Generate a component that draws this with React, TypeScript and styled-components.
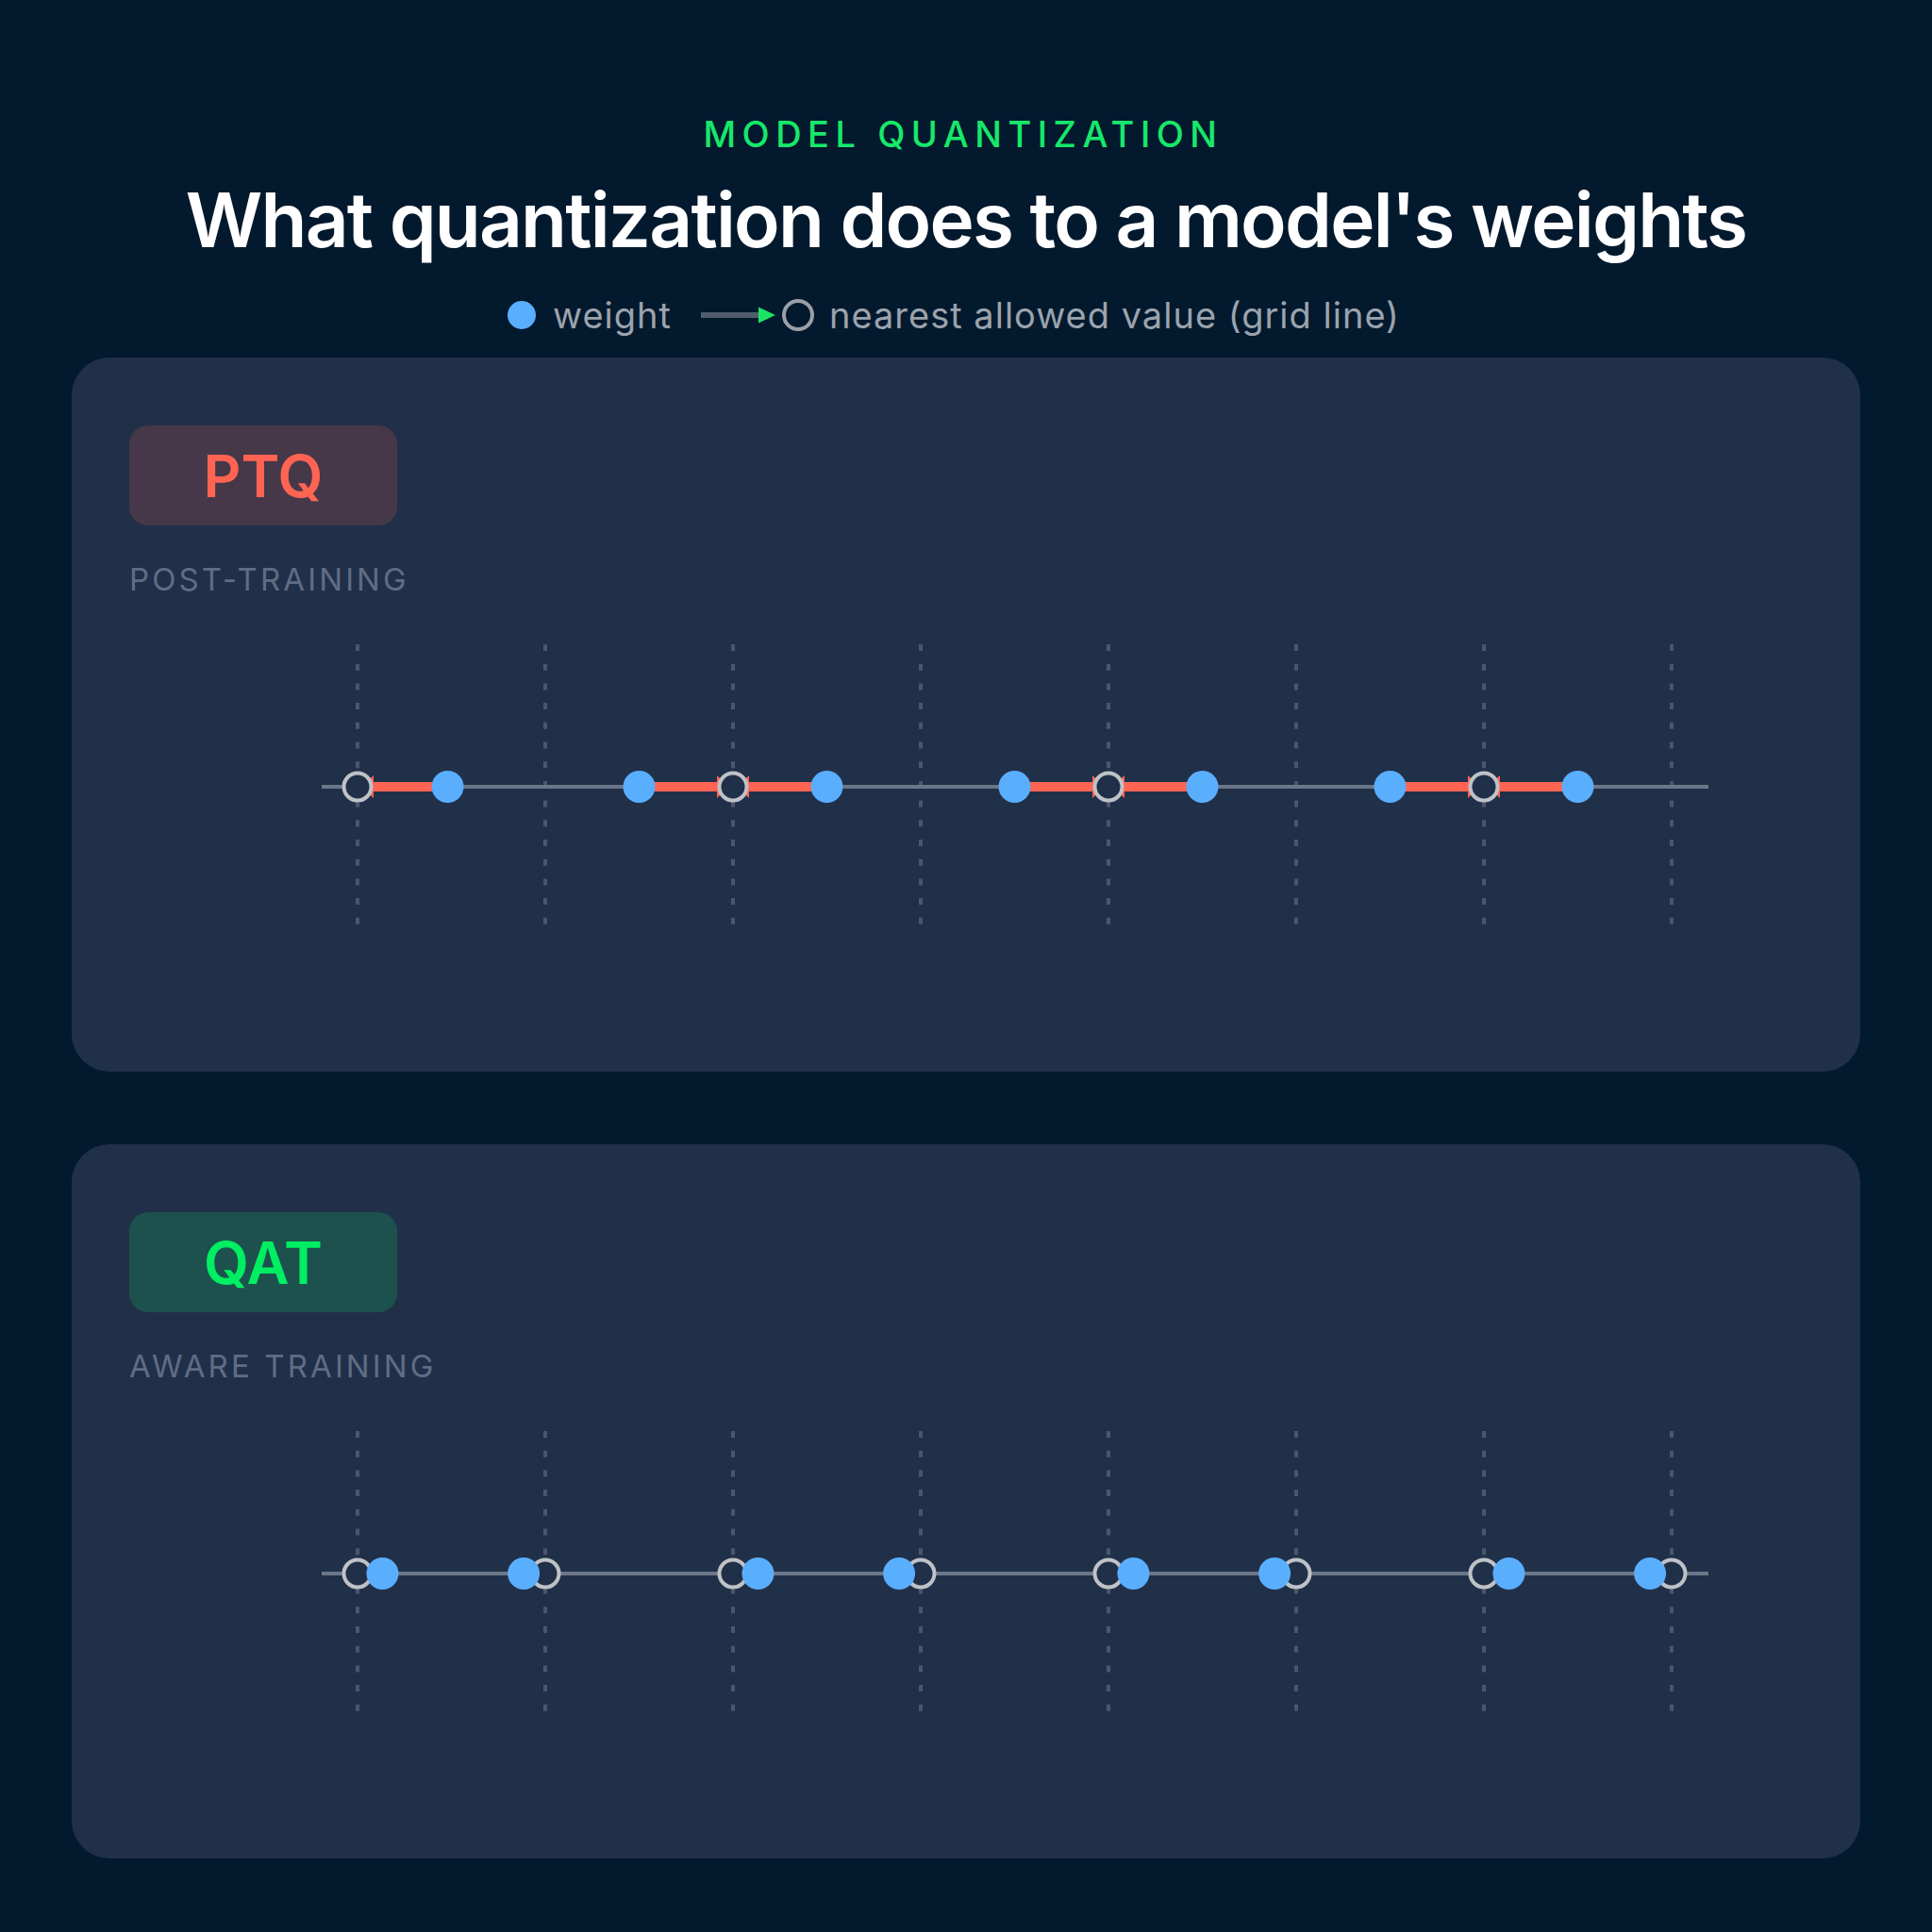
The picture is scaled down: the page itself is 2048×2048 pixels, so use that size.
import React from 'react';
import styled, { createGlobalStyle } from 'styled-components';

const GlobalStyle = createGlobalStyle`
  html, body {
    margin: 0;
    padding: 0;
    background: #03192e;
  }
  body {
    font-family: Inter, "Noto Sans", "Liberation Sans", sans-serif;
  }
`;

const CARD_BG = '#213049';
const GRID_X0 = 242;
const GRID_STEP = 199;
const AXIS_Y = 151;
const CHART_H = 300;

type Pair = { weight: number; target: number };

const ptqPairs: Pair[] = [
  { weight: 0.48, target: 0 },
  { weight: 1.5, target: 2 },
  { weight: 2.5, target: 2 },
  { weight: 3.5, target: 4 },
  { weight: 4.5, target: 4 },
  { weight: 5.5, target: 6 },
  { weight: 6.5, target: 6 },
];

const qatPairs: Pair[] = Array.from({ length: 8 }, (_, i) => ({
  weight: i + (i % 2 === 0 ? 0.133 : -0.115),
  target: i,
}));

const Page = styled.main`
  width: 2048px;
  min-height: 2048px;
  box-sizing: border-box;
  padding: 119px 76px 0;
  display: flex;
  flex-direction: column;
  align-items: center;
`;

const Eyebrow = styled.div`
  font-size: 38px;
  line-height: 46px;
  font-weight: 500;
  letter-spacing: 6.5px;
  margin-right: 6px;
  color: #17e86a;
`;

const Title = styled.h1`
  margin: 20px 0 0;
  font-size: 80px;
  line-height: 96px;
  font-weight: 600;
  letter-spacing: -1.8px;
  color: #ffffff;
`;

const Legend = styled.div`
  margin: 33px 26px 0 0;
  height: 40px;
  display: flex;
  align-items: center;
  font-size: 38px;
  letter-spacing: 1px;
  color: #9ba3ad;
`;

const LegendDot = styled.span`
  width: 30px;
  height: 30px;
  border-radius: 50%;
  background: #5aaefe;
  margin-right: 18px;
`;

const LegendRing = styled.span`
  width: 34px;
  height: 34px;
  box-sizing: border-box;
  border-radius: 50%;
  border: 4px solid #9aa0a8;
  margin: 0 16px 0 6px;
`;

const LegendArrow = styled.svg`
  margin-left: 31px;
  display: block;
`;

const Cards = styled.div`
  margin-top: 25px;
  width: 100%;
  display: flex;
  flex-direction: column;
  gap: 77px;
`;

const Card = styled.section`
  height: 757px;
  box-sizing: border-box;
  padding: 72px 61px 0;
  border-radius: 40px;
  background: ${CARD_BG};
  display: flex;
  flex-direction: column;
  align-items: flex-start;
`;

const Badge = styled.div<{ $tone: 'red' | 'green' }>`
  width: 284px;
  height: 106px;
  border-radius: 20px;
  display: flex;
  align-items: center;
  justify-content: center;
  font-size: 62px;
  font-weight: 600;
  background: ${(p) => (p.$tone === 'red' ? '#463848' : '#1d514d')};
  color: ${(p) => (p.$tone === 'red' ? '#ff6452' : '#00ee62')};
`;

const SubLabel = styled.div`
  margin-top: 37px;
  font-size: 33px;
  line-height: 40px;
  letter-spacing: 3.1px;
  color: #5f6d84;
`;

const ChartSvg = styled.svg`
  display: block;
  margin-top: 49px;
`;

const gx = (v: number) => GRID_X0 + v * GRID_STEP;

function NumberLine({ pairs, showError }: { pairs: Pair[]; showError: boolean }) {
  const targets = showError ? Array.from(new Set(pairs.map((p) => p.target))) : pairs.map((p) => p.target);
  return (
    <ChartSvg width={1774} height={CHART_H} viewBox={`0 0 1774 ${CHART_H}`}>
      {Array.from({ length: 8 }, (_, i) => (
        <line
          key={i}
          x1={gx(i)}
          x2={gx(i)}
          y1={0}
          y2={CHART_H}
          stroke="#4a576b"
          strokeWidth={4}
          strokeDasharray="7 13.7"
        />
      ))}
      <line x1={204} x2={1674} y1={AXIS_Y} y2={AXIS_Y} stroke="#6b7687" strokeWidth={4} />
      {showError &&
        pairs.map((p, i) => {
          const wx = gx(p.weight);
          const tx = gx(p.target);
          const dir = tx > wx ? 1 : -1;
          const base = tx - dir * 17;
          return (
            <g key={i}>
              <line x1={wx} x2={base} y1={AXIS_Y} y2={AXIS_Y} stroke="#ff6452" strokeWidth={10} />
              <polygon
                points={`${base},${AXIS_Y - 12} ${base},${AXIS_Y + 12} ${tx - dir * 4},${AXIS_Y}`}
                fill="#ff6452"
              />
            </g>
          );
        })}
      {targets.map((t, i) => (
        <circle key={i} cx={gx(t)} cy={AXIS_Y} r={14.5} fill={CARD_BG} stroke="#bfc2c7" strokeWidth={4} />
      ))}
      {pairs.map((p, i) => (
        <circle key={i} cx={gx(p.weight)} cy={AXIS_Y} r={17} fill="#5aaefe" />
      ))}
    </ChartSvg>
  );
}

export default function App() {
  return (
    <>
      <GlobalStyle />
      <Page>
        <Eyebrow>MODEL QUANTIZATION</Eyebrow>
        <Title>What quantization does to a model's weights</Title>
        <Legend>
          <LegendDot />
          <span>weight</span>
          <LegendArrow width={80} height={20} viewBox="0 0 80 20">
            <line x1={0} x2={62} y1={10} y2={10} stroke="#4f5d6e" strokeWidth={6} />
            <polygon points="61,1.5 61,18.5 79,10" fill="#1ee466" />
          </LegendArrow>
          <LegendRing />
          <span>nearest allowed value (grid line)</span>
        </Legend>
        <Cards>
          <Card>
            <Badge $tone="red">PTQ</Badge>
            <SubLabel>POST-TRAINING</SubLabel>
            <NumberLine pairs={ptqPairs} showError />
          </Card>
          <Card>
            <Badge $tone="green">QAT</Badge>
            <SubLabel>AWARE TRAINING</SubLabel>
            <NumberLine pairs={qatPairs} showError={false} />
          </Card>
        </Cards>
      </Page>
    </>
  );
}
